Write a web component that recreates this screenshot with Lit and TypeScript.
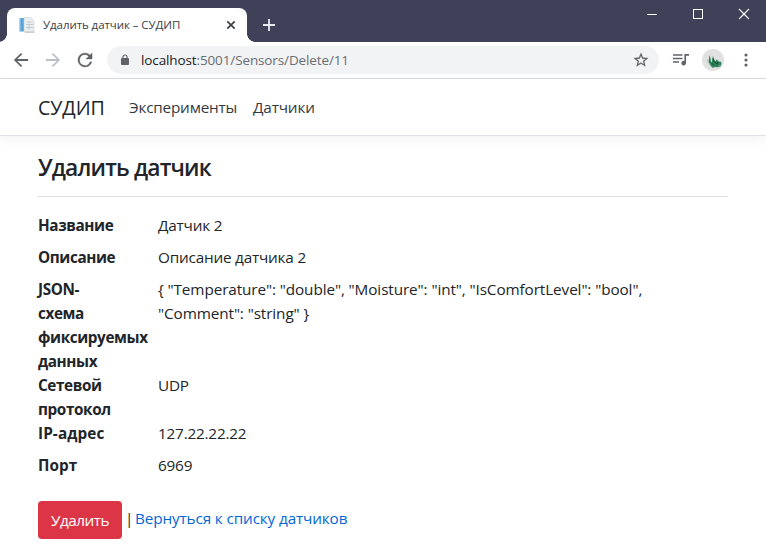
import { LitElement, html, css, svg } from "lit";
import { customElement, property } from "lit/decorators.js";

interface Field {
  key: string;
  label: string;
  value: string;
}

const FIELDS: Field[] = [
  { key: "name", label: "Название", value: "Датчик 2" },
  { key: "about", label: "Описание", value: "Описание датчика 2" },
  {
    key: "schema",
    label: "JSON-схема фиксируемых данных",
    value: '{ "Temperature": "double", "Moisture": "int", "IsComfortLevel": "bool", "Comment": "string" }',
  },
  { key: "protocol", label: "Сетевой протокол", value: "UDP" },
  { key: "ip", label: "IP-адрес", value: "127.22.22.22" },
  { key: "port", label: "Порт", value: "6969" },
];

@customElement("browser-chrome")
export class BrowserChrome extends LitElement {
  @property() pageTitle = "";
  @property() host = "";
  @property() path = "";

  static styles = css`
    :host {
      display: block;
      font-family: "Open Sans", "Noto Sans", sans-serif;
    }
    svg {
      display: block;
      flex: none;
    }
    .strip {
      box-sizing: border-box;
      height: 42px;
      background: #3e4157;
      display: flex;
      padding: 0 7px;
    }
    .tab {
      position: relative;
      box-sizing: border-box;
      width: 240px;
      height: 34px;
      margin-top: 8px;
      padding: 0 10px 0 12px;
      background: #fff;
      border-radius: 8px 8px 0 0;
      display: flex;
      align-items: center;
    }
    .tab::before,
    .tab::after {
      content: "";
      position: absolute;
      bottom: 0;
      width: 8px;
      height: 8px;
    }
    .tab::before {
      left: -8px;
      background: radial-gradient(circle at 0 0, transparent 7.5px, #fff 8px);
    }
    .tab::after {
      right: -8px;
      background: radial-gradient(circle at 100% 0, transparent 7.5px, #fff 8px);
    }
    .title {
      flex: 1;
      margin-left: 8px;
      font-size: 11.5px;
      letter-spacing: -0.07px;
      line-height: 16px;
      color: #3c4043;
      white-space: nowrap;
    }
    .plus {
      margin: 18px 0 0 15px;
    }
    .controls {
      margin-left: auto;
      display: flex;
      gap: 34px;
      padding: 8px 9px 0 0;
    }
    .bar {
      box-sizing: border-box;
      height: 37px;
      border-bottom: 1px solid #d9dbde;
      background: #fff;
      display: flex;
      align-items: center;
      padding: 0 13px 0 13px;
    }
    .nav {
      display: flex;
      gap: 16px;
      width: 94px;
    }
    .omnibox {
      box-sizing: border-box;
      width: 552px;
      height: 28px;
      border-radius: 14px;
      background: #f1f3f4;
      display: flex;
      align-items: center;
      padding: 0 10px 0 13px;
    }
    .url {
      flex: 1;
      margin-left: 11px;
      font-size: 13.5px;
      letter-spacing: -0.12px;
      line-height: 20px;
      color: #6a6e73;
      white-space: nowrap;
    }
    .host {
      color: #202124;
    }
    .tools {
      display: flex;
      align-items: center;
      margin-left: 14px;
    }
    .avatar {
      margin: 0 20px 0 13px;
    }
  `;

  render() {
    return html`
      <div class="strip">
        <div class="tab">
          <svg width="16" height="16" viewBox="0 0 16 16">
            <rect x="0.5" y="1" width="5" height="13.5" fill="#56a5d8" />
            <rect x="0.5" y="1" width="1" height="13.5" fill="#a9d3ec" />
            <path d="M5 0.5h7l3 3.5v11H5z" fill="#e9edef" stroke="#cdd3d6" stroke-width=".6" />
            <path d="M8 5h4.5M7 7.5h7M7 10.5h7M10 7.5v5" stroke="#c3cace" fill="none" />
            <path d="M6 15.2h9.5" stroke="#b8bfc3" />
          </svg>
          <span class="title">${this.pageTitle}</span>
          <svg width="12" height="12" viewBox="0 0 12 12">
            <path d="M2.3 2.3l7.4 7.4M9.7 2.3L2.3 9.7" stroke="#3c4043" stroke-width="1.7" />
          </svg>
        </div>
        <svg class="plus" width="14" height="14" viewBox="0 0 14 14">
          <path d="M7 1v12M1 7h12" stroke="#e8eaed" stroke-width="1.8" />
        </svg>
        <div class="controls">
          <svg width="12" height="12" viewBox="0 0 12 12">
            <path d="M1 6.5h10" stroke="#fff" />
          </svg>
          <svg width="12" height="12" viewBox="0 0 12 12">
            <rect x="1.5" y="1.5" width="9" height="9" fill="none" stroke="#fff" />
          </svg>
          <svg width="12" height="12" viewBox="0 0 12 12">
            <path d="M1 1l10 10M11 1L1 11" stroke="#fff" stroke-width="1.1" />
          </svg>
        </div>
      </div>
      <div class="bar">
        <div class="nav">
          <svg width="16" height="16" viewBox="3 3 18 18">
            <path d="M20 11H7.83l5.59-5.59L12 4l-8 8 8 8 1.41-1.41L7.83 13H20z" fill="#5f6368" />
          </svg>
          <svg width="16" height="16" viewBox="3 3 18 18">
            <path d="M12 4l-1.41 1.41L16.17 11H4v2h12.17l-5.58 5.59L12 20l8-8z" fill="#bdc1c6" />
          </svg>
          <svg width="16" height="16" viewBox="3 3 18 18">
            <path
              d="M17.65 6.35A7.96 7.96 0 0 0 12 4a8 8 0 1 0 7.73 10h-2.08A6 6 0 1 1 12 6c1.66 0 3.14.69 4.22 1.78L13 11h7V4z"
              fill="#5f6368"
              stroke="#5f6368"
              stroke-width=".3"
            />
          </svg>
        </div>
        <div class="omnibox">
          <svg width="10" height="12" viewBox="0 0 10 12">
            <rect x="1" y="4" width="8" height="7" rx="1" fill="#5f6368" />
            <path d="M3 4.5V3a2 2 0 0 1 4 0v1.5" fill="none" stroke="#5f6368" stroke-width="1.2" />
          </svg>
          <span class="url"><span class="host">${this.host}</span>${this.path}</span>
          <svg width="16" height="16" viewBox="1 1 22 22">
            <path
              d="M22 9.24l-7.19-.62L12 2 9.19 8.63 2 9.24l5.46 4.73L5.82 21 12 17.27 18.18 21l-1.63-7.03L22 9.24zM12 15.4l-3.76 2.27 1-4.28-3.32-2.88 4.38-.38L12 6.1l1.71 4.04 4.38.38-3.32 2.88 1 4.28L12 15.4z"
              fill="#5f6368"
              stroke="#5f6368"
              stroke-width=".2"
            />
          </svg>
        </div>
        <div class="tools">
          <svg width="16" height="14" viewBox="0 0 16 14">
            <path d="M0 2h9.5M0 5.5h9.5M0 9h6" stroke="#5f6368" stroke-width="1.5" />
            <path d="M11.4 1H16v1.8h-3v7.3a2.3 2.3 0 1 1-1.6-2.2z" fill="#5f6368" />
          </svg>
          <svg class="avatar" width="22" height="22" viewBox="0 0 22 22">
            <circle cx="11" cy="11" r="11" fill="#e0e1e0" />
            <path
              d="M7.4 6l1 3 .5 3.2 1 1.3.4-3.5.6-3 1.2 3.2 1.2 2.3 1.4-2.1 1.2.8-.6 2 1.5-.8 2 .4.8 1.8-1.1 3-2.2.6-3.2-.3-2.6.8-2.5-2.8-1.4-3.6.4-2z"
              fill="#2d8058"
            />
            <path d="M11 9.5l1.5 4 2.6 1M9.6 14l2 2M16 12l-1 3.5" fill="none" stroke="#114c35" />
            <path d="M5.6 10.5l1 3.2 2.3 3M16 17.4l2.6-1" fill="none" stroke="#8db5a0" stroke-width=".8" />
          </svg>
          <svg width="4" height="14" viewBox="0 0 4 14">
            ${[2, 7, 12].map((y) => svg`<circle cx="2" cy=${y} r="1.55" fill="#5f6368" />`)}
          </svg>
        </div>
      </div>
    `;
  }
}

@customElement("app-root")
export class AppRoot extends LitElement {
  static styles = css`
    :host {
      display: flex;
      flex-direction: column;
      height: 548px;
      overflow: hidden;
      background: #fff;
      color: #212529;
      font-family: "Open Sans", "Noto Sans", sans-serif;
      font-size: 15.3px;
      font-weight: 400;
      line-height: 24px;
    }
    .navbar {
      box-sizing: border-box;
      height: 57px;
      flex: none;
      display: flex;
      align-items: center;
      padding: 0 38px;
      border-bottom: 1px solid #dee2e6;
      box-shadow: 0 4px 12px rgba(0, 0, 0, 0.05);
      color: #343a40;
      white-space: nowrap;
    }
    .brand {
      width: 91px;
      padding-top: 1px;
      font-size: 19.6px;
      line-height: 30px;
      color: #212529;
      letter-spacing: -0.05px;
    }
    .link-exp {
      width: 124px;
      letter-spacing: -0.2px;
    }
    .link-sensors {
      letter-spacing: -0.15px;
    }
    main {
      padding: 17px 38px 0;
    }
    h1 {
      margin: 0;
      font-size: 22.8px;
      font-weight: 600;
      line-height: 30px;
      letter-spacing: -0.83px;
    }
    hr {
      margin: 13px 0 16px;
      border: 0;
      border-top: 1px solid #dfdfdf;
    }
    dl {
      margin: 0;
      display: grid;
      grid-template-columns: 85px 500px;
      column-gap: 35px;
    }
    dt {
      font-weight: 700;
      letter-spacing: -0.4px;
    }
    dt.ip,
    dt.port {
      letter-spacing: 0.1px;
    }
    dd {
      margin: 0 0 8px;
      letter-spacing: -0.2px;
    }
    dd.schema {
      letter-spacing: -0.1px;
    }
    .protocol {
      margin-bottom: 0;
    }
    .actions {
      display: flex;
      align-items: flex-start;
      margin-top: 16px;
      white-space: nowrap;
    }
    button {
      box-sizing: border-box;
      width: 84px;
      height: 38px;
      padding: 0;
      border: 0;
      border-radius: 4px;
      background: #dc3545;
      color: #fff;
      font: inherit;
      letter-spacing: -0.5px;
    }
    .sep {
      width: 13px;
      box-sizing: border-box;
      padding: 5px 0 0 3px;
    }
    .back {
      padding-top: 5px;
      color: #0366d6;
      letter-spacing: -0.13px;
    }
  `;

  render() {
    return html`
      <browser-chrome
        pageTitle="Удалить датчик – СУДИП"
        host="localhost"
        path=":5001/Sensors/Delete/11"
      ></browser-chrome>
      <nav class="navbar">
        <span class="brand">СУДИП</span>
        <span class="link-exp">Эксперименты</span>
        <span class="link-sensors">Датчики</span>
      </nav>
      <main>
        <h1>Удалить датчик</h1>
        <hr />
        <dl>
          ${FIELDS.map(
            (f) => html`<dt class=${f.key}>${f.label}</dt><dd class=${f.key}>${f.value}</dd>`,
          )}
        </dl>
        <div class="actions">
          <button>Удалить</button><span class="sep">|</span><span class="back">Вернуться к списку датчиков</span>
        </div>
      </main>
    `;
  }
}
